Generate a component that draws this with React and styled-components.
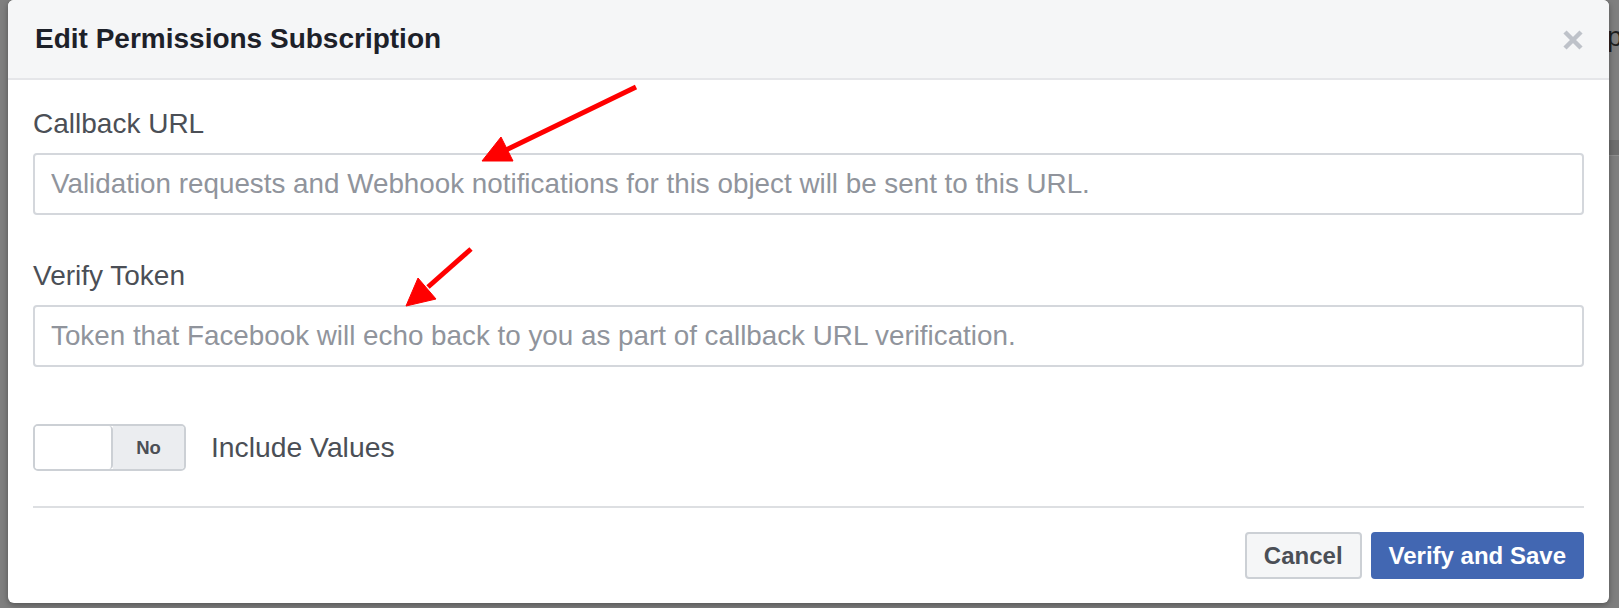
import React from "react";
import styled, { createGlobalStyle } from "styled-components";

const GlobalStyle = createGlobalStyle`
  body {
    margin: 0;
    font-family: "Liberation Sans", Arial, Helvetica, sans-serif;
  }
`;

const Page = styled.div`
  position: relative;
  width: 1619px;
  height: 608px;
  display: flex;
  background: #7f7f7f;
  overflow: hidden;
`;

const Modal = styled.div`
  position: relative;
  z-index: 1;
  margin-left: 8px;
  width: 1601px;
  height: 603px;
  flex-shrink: 0;
  display: flex;
  flex-direction: column;
  background: #fff;
  border-radius: 6px;
  box-shadow: 0 2px 6px rgba(0, 0, 0, 0.35);
`;

const Header = styled.div`
  height: 78px;
  display: flex;
  align-items: center;
  justify-content: space-between;
  padding: 0 26px 0 27px;
  background: #f5f6f7;
  border-bottom: 2px solid #e5e6e9;
  border-radius: 6px 6px 0 0;
`;

const Title = styled.div`
  font-size: 28px;
  font-weight: 700;
  color: #1d2129;
`;

const Close = styled.button`
  width: 20px;
  height: 20px;
  margin-top: 2px;
  padding: 0;
  border: 0;
  background: none;
  display: flex;
  cursor: pointer;
`;

const Body = styled.div`
  display: flex;
  flex-direction: column;
  padding: 27px 25px 0;
`;

const Field = styled.div`
  display: flex;
  flex-direction: column;
  margin-top: ${(props) => props.offset || 0}px;
`;

const Label = styled.label`
  font-size: 28px;
  line-height: 34px;
  color: #4b4f56;
  margin-bottom: 12px;
`;

const Input = styled.input`
  box-sizing: border-box;
  height: 62px;
  padding: 0 16px;
  border: 2px solid #d4d7dc;
  border-radius: 4px;
  font-family: inherit;
  font-size: 27.8px;
  color: #1d2129;
  outline: none;

  &::placeholder {
    color: #90949c;
  }
`;

const ToggleRow = styled.div`
  display: flex;
  align-items: center;
  gap: 25px;
  margin-top: 57px;
`;

const Toggle = styled.div`
  box-sizing: border-box;
  width: 153px;
  height: 47px;
  display: flex;
  border: 2px solid #ccd0d5;
  border-radius: 5px;
  overflow: hidden;
`;

const Knob = styled.div`
  width: 76px;
  background: #fff;
  border-right: 2px solid #ccd0d5;
  border-radius: 0 4px 4px 0;
`;

const Track = styled.div`
  flex: 1;
  display: flex;
  align-items: center;
  justify-content: center;
  background: #ebedf0;
  font-size: 18.5px;
  font-weight: 700;
  color: #4b4f56;
`;

const ToggleText = styled.span`
  font-size: 28.3px;
  color: #4b4f56;
`;

const Divider = styled.div`
  height: 2px;
  margin-top: 35px;
  background: #dddfe2;
`;

const Footer = styled.div`
  display: flex;
  justify-content: flex-end;
  gap: 9px;
  margin-top: 24px;
`;

const Button = styled.button`
  box-sizing: border-box;
  height: 47px;
  padding: 0 ${(props) => (props.primary ? 16 : 17)}px;
  border: 2px solid ${(props) => (props.primary ? "#4267b2" : "#ccd0d5")};
  border-radius: 4px;
  background: ${(props) => (props.primary ? "#4267b2" : "#f5f6f7")};
  color: ${(props) => (props.primary ? "#fff" : "#4b4f56")};
  font-family: inherit;
  font-size: 24px;
  font-weight: 700;
  cursor: pointer;
`;

const Strip = styled.div`
  flex: 1;
  display: flex;
  flex-direction: column;
  padding-top: 20px;
`;

const StripText = styled.span`
  margin-left: -2px;
  font-size: 28px;
  line-height: 34px;
  color: #1e1e1e;
`;

const StripBand = styled.div`
  height: 15px;
  margin-top: 86px;
  background: #6e6e6e;
  border-bottom: 1px solid #8e8e8e;
`;

const Arrows = styled.svg`
  position: absolute;
  left: 0;
  top: 0;
  z-index: 2;
  pointer-events: none;
`;

const CloseIcon = () => (
  <svg width="20" height="20" viewBox="0 0 20 20">
    <path d="M2 2 L18 18 M18 2 L2 18" stroke="#bec2c9" strokeWidth="4.5" />
  </svg>
);

const arrows = [
  { from: [636, 87], to: [506, 150], head: "482,161 501,137 513,161" },
  { from: [471, 249], to: [428, 287], head: "406,306 418,278 436,299" },
];

export default function App() {
  return (
    <>
      <GlobalStyle />
      <Page>
        <Modal>
          <Header>
            <Title>Edit Permissions Subscription</Title>
            <Close aria-label="Close">
              <CloseIcon />
            </Close>
          </Header>
          <Body>
            <Field>
              <Label>Callback URL</Label>
              <Input placeholder="Validation requests and Webhook notifications for this object will be sent to this URL." />
            </Field>
            <Field offset={44}>
              <Label>Verify Token</Label>
              <Input placeholder="Token that Facebook will echo back to you as part of callback URL verification." />
            </Field>
            <ToggleRow>
              <Toggle>
                <Knob />
                <Track>No</Track>
              </Toggle>
              <ToggleText>Include Values</ToggleText>
            </ToggleRow>
            <Divider />
            <Footer>
              <Button>Cancel</Button>
              <Button primary>Verify and Save</Button>
            </Footer>
          </Body>
        </Modal>
        <Strip>
          <StripText>p</StripText>
          <StripBand />
        </Strip>
        <Arrows width="1619" height="608" viewBox="0 0 1619 608">
          {arrows.map((a, i) => (
            <g key={i} fill="#ff0000" stroke="#ff0000">
              <line
                x1={a.from[0]}
                y1={a.from[1]}
                x2={a.to[0]}
                y2={a.to[1]}
                strokeWidth="5"
              />
              <polygon points={a.head} strokeWidth="1" />
            </g>
          ))}
        </Arrows>
      </Page>
    </>
  );
}
